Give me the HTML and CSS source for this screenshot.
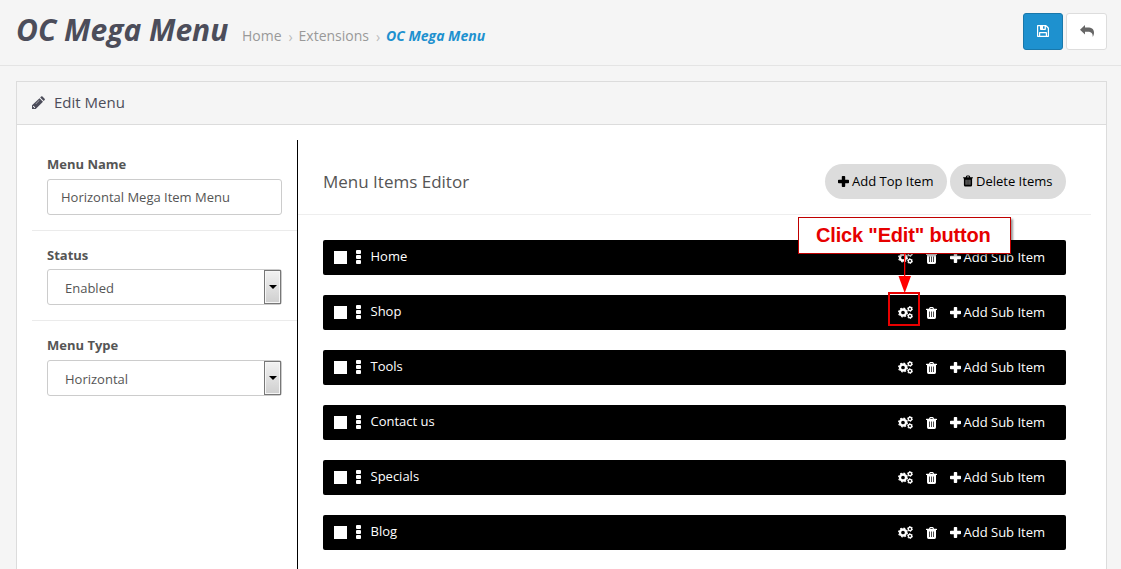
FILE: index.html
```html
<!DOCTYPE html>
<html lang="en">
<head>
<meta charset="utf-8">
<title>OC Mega Menu</title>
<link rel="stylesheet" href="styles.css">
</head>
<body>
<svg class="sprite" aria-hidden="true">
  <symbol id="pencil" viewBox="0 0 14 14"><path fill-rule="evenodd" d="M8.500 2.200 12 5.700 4.700 13H1V9.300zM2 10.400v.6h.9v1h.7l.6-.6-1.600-1.600zM8.100 4.200 4.600 7.700l.3.3 3.500-3.500zM9.200 1.500l.9-.9q.7-.6 1.400 0l2.100 2.100q.6.700 0 1.400l-.9.900z"/></symbol>
  <symbol id="save" viewBox="0 0 12 12"><path fill-rule="evenodd" d="M.7 0h8.100q.5 0 .9.400l1.900 1.900q.4.400.4.900v8.100q0 .7-.7.700H.7Q0 12 0 11.300V.7Q0 0 .7 0zM1.200 1.200v9.600H2V7.700Q2 7 2.700 7h6.600q.7 0 .7.700v3.100h.8V3.400L8.900 1.400V4.200q0 .8-.8.800H3.800Q3 5 3 4.200v-3zm4.800 0v2.600h1.600V1.200zM3.200 8.200v2.600h5.600V8.200z"/></symbol>
  <symbol id="reply" viewBox="0 0 14 12"><path d="M5 0v2.600h2.500C12 2.600 14 4.500 14 7.800c0 1.500-.5 3-1.300 4.200.2-3.800-1.300-5.200-5.200-5.200H5v2.600L0 4.700z"/></symbol>
  <symbol id="plus" viewBox="0 0 11 11"><path d="M4.600 0h1.800q.8 0 .8.800v3h3q.8 0 .8.800v1.800q0 .8-.8.800h-3v3q0 .8-.8.800H4.600q-.8 0-.8-.8v-3h-3Q0 7.200 0 6.400V4.600q0-.8.800-.8h3v-3Q3.800 0 4.600 0z"/></symbol>
  <symbol id="trash" viewBox="0 0 11 12"><path fill-rule="evenodd" d="M3 1.800 3.500.6Q3.800 0 4.400 0h2.200q.6 0 .9.600L8 1.800h2.500q.5 0 .5.500V3h-1v7.300q0 1.700-1.500 1.700h-6Q1 12 1 10.300V3H0v-.7q0-.5.500-.5zM4.200 1.800h2.600L6.500 1h-2zM3 4.500v5.500h.7V4.500zm2.150 0v5.500h.7V4.500zm2.150 0v5.500H8V4.500z"/></symbol>
  <symbol id="cogs" viewBox="0 0 15 13"><circle cx="5" cy="6.500" r="3" fill="none" stroke="currentColor" stroke-width="2.300"/><circle cx="5" cy="6.500" r="4.400" fill="none" stroke="currentColor" stroke-width="1.200" stroke-dasharray="1.800 1.656"/><circle cx="12" cy="2.900" r="1.700" fill="none" stroke="currentColor" stroke-width="1.400"/><circle cx="12" cy="2.900" r="2.500" fill="none" stroke="currentColor" stroke-width=".9" stroke-dasharray="1.350 1.268"/><circle cx="12" cy="10.100" r="1.700" fill="none" stroke="currentColor" stroke-width="1.400"/><circle cx="12" cy="10.100" r="2.500" fill="none" stroke="currentColor" stroke-width=".9" stroke-dasharray="1.350 1.268"/></symbol>
</svg>

<header class="page-header">
  <h1 class="title">OC Mega Menu</h1>
  <nav class="breadcrumb"><span>Home</span><i class="sep">›</i><span>Extensions</span><i class="sep">›</i><span class="current">OC Mega Menu</span></nav>
  <div class="header-actions">
    <button class="btn btn-primary" aria-label="Save"><svg width="12" height="12"><use href="#save"/></svg></button>
    <button class="btn" aria-label="Back"><svg width="14" height="12"><use href="#reply"/></svg></button>
  </div>
</header>

<main class="panel">
  <div class="panel-heading"><svg width="14" height="14"><use href="#pencil"/></svg><span>Edit Menu</span></div>
  <div class="panel-body">
    <aside class="settings">
      <div class="field"><label class="label">Menu Name</label><div class="control">Horizontal Mega Item Menu</div></div>
      <div class="field"><label class="label">Status</label><div class="control select">Enabled<span class="drop"></span></div></div>
      <div class="field"><label class="label">Menu Type</label><div class="control select">Horizontal<span class="drop"></span></div></div>
    </aside>
    <section class="editor">
      <div class="editor-head">
        <h2 class="editor-title">Menu Items Editor</h2>
        <button class="pill pill-add"><svg width="11" height="11"><use href="#plus"/></svg>Add Top Item</button>
        <button class="pill pill-delete"><svg width="10" height="12"><use href="#trash"/></svg>Delete Items</button>
      </div>
      <div class="items">
        <div class="item"><span class="check"></span><span class="grip"><b></b><b></b><b></b></span><span class="name">Home</span><svg class="cogs" width="15" height="13"><use href="#cogs"/></svg><svg class="trash" width="11" height="12"><use href="#trash"/></svg><svg class="plus" width="11" height="11"><use href="#plus"/></svg><span class="add">Add Sub Item</span></div>
        <div class="item"><span class="check"></span><span class="grip"><b></b><b></b><b></b></span><span class="name">Shop</span><svg class="cogs" width="15" height="13"><use href="#cogs"/></svg><svg class="trash" width="11" height="12"><use href="#trash"/></svg><svg class="plus" width="11" height="11"><use href="#plus"/></svg><span class="add">Add Sub Item</span></div>
        <div class="item"><span class="check"></span><span class="grip"><b></b><b></b><b></b></span><span class="name">Tools</span><svg class="cogs" width="15" height="13"><use href="#cogs"/></svg><svg class="trash" width="11" height="12"><use href="#trash"/></svg><svg class="plus" width="11" height="11"><use href="#plus"/></svg><span class="add">Add Sub Item</span></div>
        <div class="item"><span class="check"></span><span class="grip"><b></b><b></b><b></b></span><span class="name">Contact us</span><svg class="cogs" width="15" height="13"><use href="#cogs"/></svg><svg class="trash" width="11" height="12"><use href="#trash"/></svg><svg class="plus" width="11" height="11"><use href="#plus"/></svg><span class="add">Add Sub Item</span></div>
        <div class="item"><span class="check"></span><span class="grip"><b></b><b></b><b></b></span><span class="name">Specials</span><svg class="cogs" width="15" height="13"><use href="#cogs"/></svg><svg class="trash" width="11" height="12"><use href="#trash"/></svg><svg class="plus" width="11" height="11"><use href="#plus"/></svg><span class="add">Add Sub Item</span></div>
        <div class="item"><span class="check"></span><span class="grip"><b></b><b></b><b></b></span><span class="name">Blog</span><svg class="cogs" width="15" height="13"><use href="#cogs"/></svg><svg class="trash" width="11" height="12"><use href="#trash"/></svg><svg class="plus" width="11" height="11"><use href="#plus"/></svg><span class="add">Add Sub Item</span></div>
      </div>
    </section>
  </div>
</main>

<div class="callout">Click "Edit" button</div>
<svg class="arrow" width="14" height="40" viewBox="0 0 14 40"><path d="M6 0h1.300v23H6z"/><path d="M.5 23h12.500L6.700 40z"/></svg>
<div class="highlight"></div>
</body>
</html>
```
FILE: styles.css
```css
* { box-sizing: border-box; }
body {
  margin: 0;
  height: 569px;
  overflow: hidden;
  display: flex;
  flex-direction: column;
  background: #f5f5f5;
  color: #555;
  font: 13px/18px "Open Sans", "Noto Sans", sans-serif;
}
svg { fill: currentColor; flex: none; display: block; }
button { font: inherit; cursor: pointer; }
.sprite { position: absolute; width: 0; height: 0; }

.page-header {
  height: 66px;
  flex: none;
  display: flex;
  align-items: flex-start;
  padding: 0 14px 0 16px;
  border-bottom: 1px solid #e4e4e4;
}
.title {
  margin: 9px 0 0;
  width: 226px;
  font-size: 30px;
  line-height: 42px;
  font-weight: 700;
  font-style: italic;
  color: #4c4d5a;
  white-space: nowrap;
}
.breadcrumb {
  display: flex;
  margin-top: 26px;
  font-size: 14px;
  line-height: 20px;
  color: #999;
  white-space: nowrap;
}
.sep { width: 17px; padding-left: 7px; font-style: normal; color: #bbb; line-height: 22px; }
.current { color: #1e91cf; font-weight: 700; font-style: italic; }
.header-actions { display: flex; gap: 3px; margin: 13px 0 0 auto; }
.btn {
  width: 41px;
  height: 37px;
  padding: 0;
  display: grid;
  place-items: center;
  border: 1px solid #ddd;
  border-radius: 3px;
  background: #fff;
  color: #666;
}
.btn-primary { width: 40px; background: #1e91cf; border-color: #1978ab; color: #fff; }
.btn svg { margin-top: -1px; }

.panel {
  flex: 1;
  margin: 15px 14px 0 16px;
  border: 1px solid #dcdcdc;
  border-bottom: 0;
  background: #fff;
  display: flex;
  flex-direction: column;
}
.panel-heading {
  height: 43px;
  flex: none;
  display: flex;
  align-items: center;
  gap: 9px;
  padding: 0 0 2px 14px;
  background: #f5f5f5;
  border-bottom: 1px solid #dcdcdc;
  color: #4c4d5a;
  font-size: 15px;
  line-height: 20px;
}
.panel-heading svg { margin-top: 1px; }
.panel-body { flex: 1; display: flex; padding: 15px 15px 0; }

.settings { width: 266px; border-right: 1px solid #000; }
.field { height: 90px; padding: 15px 15px 0; border-bottom: 1px solid #ebebeb; }
.field:first-child { height: 91px; }
.field:last-child { height: 91px; border: 0; }
.label { display: block; height: 24px; font-weight: 700; }
.field:nth-child(2) .label { height: 23px; }
.control {
  position: relative;
  height: 36px;
  display: flex;
  align-items: center;
  padding: 0 13px;
  border: 1px solid #ccc;
  border-radius: 3px;
}
.select { padding: 2px 17px 0; }
.drop {
  position: absolute;
  top: 0;
  right: 0;
  width: 17px;
  height: 34px;
  border: 1px solid #777;
  background: linear-gradient(#f2f2f2, #cfcfcf);
  box-shadow: inset 0 0 0 1px #f6f6f6;
}
.drop::after {
  content: "";
  position: absolute;
  left: 4px;
  top: 14px;
  border: 4px solid transparent;
  border-top-color: #000;
  border-bottom: 0;
}

.editor { flex: 1; }
.editor-head {
  height: 75px;
  display: flex;
  align-items: flex-start;
  padding: 24px 25px 0;
  gap: 3px;
  border-bottom: 1px solid #eee;
}
.editor-title { flex: 1; margin: 6px 0 0; font-size: 17px; line-height: 24px; font-weight: 400; }
.pill {
  height: 35px;
  padding: 0 0 1px 13px;
  display: flex;
  align-items: center;
  gap: 3px;
  border: 0;
  border-radius: 18px;
  background: #dcdcdc;
  color: #000;
  white-space: nowrap;
}
.pill-add { width: 122px; }
.pill-delete { width: 116px; }
.items { display: grid; gap: 20px; padding: 25px 25px 0; }
.item {
  height: 35px;
  display: flex;
  align-items: center;
  padding-left: 11px;
  background: #000;
  color: #fff;
  border-radius: 2px;
}
.check { width: 13px; height: 13px; background: #fff; }
.grip { display: grid; gap: 1px; width: 5px; margin: -1px 9.500px 0 9px; }
.grip b { height: 4px; background: #fff; border-radius: 1px; }
.name { flex: 1; margin-top: -3px; }
.cogs { margin: 0 12.500px 0 0; }
.trash { margin: 0 13px 0 0; }
.plus { margin: -1px 3px 0 0; }
.add { width: 102.500px; margin-top: -1px; }

.callout {
  position: absolute;
  left: 798px;
  top: 217px;
  width: 213px;
  height: 37px;
  padding-left: 17px;
  border: 1px solid #c00000;
  background: #fff;
  box-shadow: 2px 2px 2px rgba(0, 0, 0, .4);
  color: #e60000;
  font: 700 20px/35px "Liberation Sans", Arial, sans-serif;
  letter-spacing: -.17px;
  white-space: nowrap;
}
.arrow { position: absolute; left: 898px; top: 253px; fill: #f00; }
.highlight { position: absolute; left: 888px; top: 292px; width: 32px; height: 34px; border: 2px solid #e80000; }
```
